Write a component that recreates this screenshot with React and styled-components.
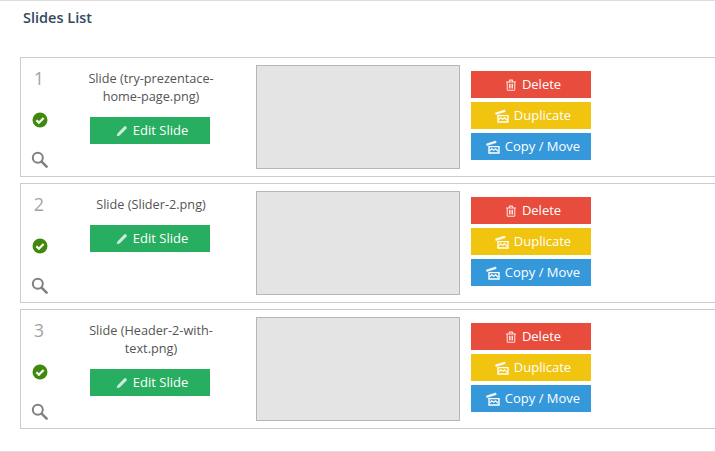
import { createGlobalStyle } from "styled-components";
import styled from "styled-components";

const GlobalStyle = createGlobalStyle`
  html, body {
    margin: 0;
    padding: 0;
    background: #fff;
    overflow: hidden;
  }
  body {
    font-family: "Open Sans", "Liberation Sans", sans-serif;
  }
`;

const Page = styled.div`
  width: 715px;
  height: 452px;
  box-sizing: border-box;
  border-top: 1px solid #ddd;
  border-bottom: 1px solid #ddd;
  padding-left: 20px;
  overflow: hidden;
`;
const Title = styled.h2`
  margin: 0;
  padding: 7px 0 0 3px;
  height: 49px;
  font-size: 14.5px;
  line-height: 19px;
  font-weight: 600;
  color: #34495e;
`;
const List = styled.div`
  display: flex;
  flex-direction: column;
  gap: 6px;
`;
const Card = styled.div`
  display: flex;
  height: 120px;
  box-sizing: border-box;
  border: 1px solid #ccc;
  border-right: none;
`;
const Side = styled.div`
  width: 38px;
  display: flex;
  flex-direction: column;
  align-items: center;
  padding-top: 8px;
`;
const Num = styled.div`
  font-size: 18px;
  line-height: 24px;
  color: #a8a39f;
  margin-left: -2px;
`;
const Check = styled.svg`
  width: 16px;
  height: 16px;
  margin-top: 22px;
`;
const Search = styled.svg`
  width: 17px;
  height: 17px;
  margin: 23px 2px 0 0;
`;
const Info = styled.div`
  width: 144px;
  margin-left: 19px;
  display: flex;
  flex-direction: column;
  align-items: center;
  padding-top: 11px;
`;
const Name = styled.div`
  font-size: 12.7px;
  line-height: 18px;
  color: #555;
  text-align: center;
  margin-bottom: 12px;
  padding-left: 2px;
`;
const Btn = styled.div`
  width: 120px;
  height: 27px;
  box-sizing: border-box;
  padding: 0 0 2px 4px;
  display: flex;
  align-items: center;
  justify-content: center;
  gap: 5px;
  flex-shrink: 0;
  font-size: 13px;
  color: #fff;
  background: ${(p) => p.$bg};
`;
const Thumb = styled.div`
  width: 204px;
  height: 104px;
  box-sizing: border-box;
  margin: 7px 0 0 34px;
  border: 1px solid #b5b5b5;
  background: #e4e4e4;
  flex-shrink: 0;
`;
const Actions = styled.div`
  display: flex;
  flex-direction: column;
  gap: 4px;
  margin: 13px 0 0 11px;
`;
const IconSvg = styled.svg`
  width: ${(p) => p.$size}px;
  height: ${(p) => p.$size}px;
  flex-shrink: 0;
  margin-top: 2px;
`;

const PencilIcon = () => (
  <IconSvg $size={12} viewBox="0 0 14 14">
    <path d="M.8 13.2l.9-3.4 8.2-8.2c.4-.4 1-.4 1.4 0l1.1 1.1c.4.4.4 1 0 1.4l-8.2 8.2z" fill="#c9efdb" />
  </IconSvg>
);
const TrashIcon = () => (
  <IconSvg $size={12} viewBox="0 0 14 14" fill="none" stroke="#ffe3df" strokeWidth="1.2">
    <path d="M2.6 4v8.2c0 .5.3.8.8.8h7.2c.5 0 .8-.3.8-.8V4M1.2 3.5h11.6M4.8 3.2l.6-1.9h3.2l.6 1.9M5.2 5.5v5.5M7 5.5v5.5M8.8 5.5v5.5" />
  </IconSvg>
);
const ClapIcon = () => (
  <IconSvg $size={14} viewBox="0 0 14 14" fill="none" stroke="#fff">
    <path d="M3 6.6h10v6.4H3z" strokeWidth="1.4" />
    <path d="M3.4 11.2l2.4-2.4 2 1.5 1.8-1.5 2.6 2.4" strokeWidth="1.2" />
    <path d="M.9 5.6L.5 3.9l9.2-2.9.5 1.6z" fill="#fff" strokeWidth="0.6" />
  </IconSvg>
);

const slides = [
  { n: 1, lines: ["Slide (try-prezentace-", "home-page.png)"] },
  { n: 2, lines: ["Slide (Slider-2.png)"] },
  { n: 3, lines: ["Slide (Header-2-with-", "text.png)"] },
];

const App = () => {
  return (
    <Page>
      <GlobalStyle />
      <Title>Slides List</Title>
      <List>
        {slides.map((s) => (
          <Card key={s.n}>
            <Side>
              <Num>{s.n}</Num>
              <Check viewBox="0 0 16 16">
                <circle cx="8" cy="8" r="7.5" fill="#3f8a0c" />
                <path d="M4.4 8.2l2.5 2.5 4.7-4.8" fill="none" stroke="#fff" strokeWidth="2.2" />
              </Check>
              <Search viewBox="0 0 17 17" fill="none" stroke="#808080">
                <circle cx="6.8" cy="6.8" r="5" strokeWidth="2" />
                <path d="M10.6 10.6l5 5" strokeWidth="2.6" strokeLinecap="round" />
              </Search>
            </Side>
            <Info>
              <Name>
                {s.lines.map((l) => (
                  <div key={l}>{l}</div>
                ))}
              </Name>
              <Btn $bg="#27ae60">
                <PencilIcon />
                Edit Slide
              </Btn>
            </Info>
            <Thumb />
            <Actions>
              <Btn $bg="#e74c3c">
                <TrashIcon />
                Delete
              </Btn>
              <Btn $bg="#f1c40f">
                <ClapIcon />
                Duplicate
              </Btn>
              <Btn $bg="#3498db">
                <ClapIcon />
                Copy / Move
              </Btn>
            </Actions>
          </Card>
        ))}
      </List>
    </Page>
  );
};

export default App;
